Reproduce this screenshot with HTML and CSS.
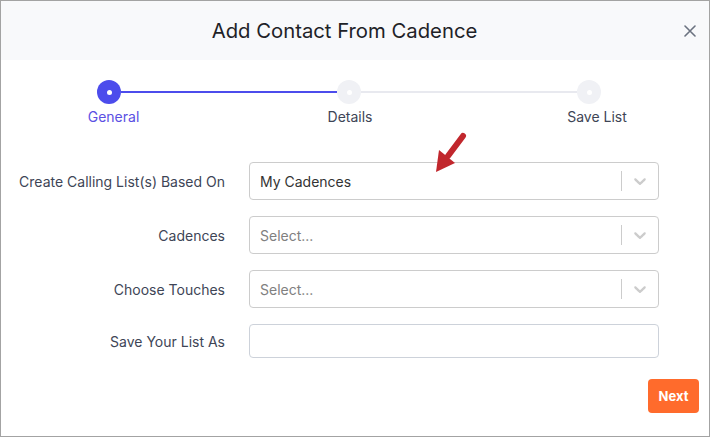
FILE: index.html
```html
<!DOCTYPE html>
<html>
<head>
<meta charset="utf-8">
<link rel="stylesheet" href="styles.css">
</head>
<body>
<div class="modal">
  <div class="modal-header">
    <div class="modal-title">Add Contact From Cadence</div>
    <button class="close" aria-label="Close">
      <svg width="12" height="12" viewBox="0 0 12 12"><path d="M1 1L11 11M11 1L1 11" stroke="#6b7280" stroke-width="1.6" stroke-linecap="round"/></svg>
    </button>
  </div>
  <div class="stepper">
    <div class="step active"><span class="dot"></span><span class="step-label first">General</span></div>
    <div class="line done"></div>
    <div class="step"><span class="dot"></span><span class="step-label second">Details</span></div>
    <div class="line"></div>
    <div class="step"><span class="dot"></span><span class="step-label third">Save List</span></div>
  </div>
  <div class="form">
    <label class="label">Create Calling List(s) Based On</label>
    <div class="select">
      <span class="value">My Cadences</span>
      <span class="sep"></span>
      <svg class="chev" width="20" height="20" viewBox="0 0 20 20"><path fill="#cccccc" d="M4.516 7.548c0.436-0.446 1.043-0.481 1.576 0l3.908 3.747 3.908-3.747c0.533-0.481 1.141-0.446 1.574 0 0.436 0.445 0.408 1.197 0 1.615-0.406 0.418-4.695 4.502-4.695 4.502-0.217 0.223-0.502 0.335-0.787 0.335s-0.57-0.112-0.789-0.335c0 0-4.287-4.084-4.695-4.502s-0.436-1.17 0-1.615z"/></svg>
    </div>
    <label class="label">Cadences</label>
    <div class="select">
      <span class="value placeholder">Select...</span>
      <span class="sep"></span>
      <svg class="chev" width="20" height="20" viewBox="0 0 20 20"><path fill="#cccccc" d="M4.516 7.548c0.436-0.446 1.043-0.481 1.576 0l3.908 3.747 3.908-3.747c0.533-0.481 1.141-0.446 1.574 0 0.436 0.445 0.408 1.197 0 1.615-0.406 0.418-4.695 4.502-4.695 4.502-0.217 0.223-0.502 0.335-0.787 0.335s-0.57-0.112-0.789-0.335c0 0-4.287-4.084-4.695-4.502s-0.436-1.17 0-1.615z"/></svg>
    </div>
    <label class="label">Choose Touches</label>
    <div class="select">
      <span class="value placeholder">Select...</span>
      <span class="sep"></span>
      <svg class="chev" width="20" height="20" viewBox="0 0 20 20"><path fill="#cccccc" d="M4.516 7.548c0.436-0.446 1.043-0.481 1.576 0l3.908 3.747 3.908-3.747c0.533-0.481 1.141-0.446 1.574 0 0.436 0.445 0.408 1.197 0 1.615-0.406 0.418-4.695 4.502-4.695 4.502-0.217 0.223-0.502 0.335-0.787 0.335s-0.57-0.112-0.789-0.335c0 0-4.287-4.084-4.695-4.502s-0.436-1.17 0-1.615z"/></svg>
    </div>
    <label class="label">Save Your List As</label>
    <div class="input"></div>
  </div>
  <div class="footer">
    <button class="next">Next</button>
  </div>
  <svg class="arrow" width="40" height="50" viewBox="0 0 40 50">
    <line x1="33" y1="8" x2="18" y2="28" stroke="#c1272d" stroke-width="6" stroke-linecap="round"/>
    <polygon points="6,44 9,22 25,35" fill="#c1272d"/>
  </svg>
</div>
</body>
</html>
```

FILE: styles.css
```css
* { box-sizing: border-box; }
html, body { margin: 0; padding: 0; background: #fff; }
body { font-family: Inter, "Noto Sans", "Liberation Sans", sans-serif; }

.modal {
  position: relative;
  width: 710px;
  height: 437px;
  border: 1px solid #a3a3a3;
  background: #fff;
  display: flex;
  flex-direction: column;
}

.modal-header {
  height: 59px;
  background: #f8f9fb;
  display: flex;
  align-items: center;
  padding: 0 9px;
}
.modal-title {
  flex: 1;
  text-align: center;
  font-size: 20.3px;
  color: #1e2227;
  font-weight: 400;
}
.close {
  width: 21px;
  height: 21px;
  padding: 0;
  border: 0;
  background: transparent;
  display: flex;
  align-items: center;
  justify-content: center;
}

.stepper {
  display: flex;
  align-items: flex-start;
  padding-left: 96px;
  margin-top: 20px;
  height: 46px;
}
.step {
  width: 24px;
  display: flex;
  flex-direction: column;
  align-items: center;
}
.dot {
  width: 24px;
  height: 24px;
  border-radius: 50%;
  background: #f0f1f5;
  display: flex;
  align-items: center;
  justify-content: center;
}
.dot::after {
  content: "";
  width: 5px;
  height: 5px;
  border-radius: 50%;
  background: #fff;
}
.step.active .dot { background: #4c4cec; }
.step-label {
  white-space: nowrap;
  font-size: 14px;
  line-height: 17px;
  margin-top: 4px;
  color: #3e4556;
}
.step-label.first { margin-left: 9px; }
.step-label.second { margin-left: 2px; }
.step-label.third { margin-left: 16px; }
.step.active .step-label { color: #5b50e3; }
.line {
  width: 216px;
  height: 2px;
  margin-top: 11px;
  background: #e8e9ef;
}
.line.done { background: #4c4cec; }

.form {
  margin-top: 36px;
  display: grid;
  grid-template-columns: 224px 410px;
  column-gap: 24px;
  row-gap: 16px;
  align-items: center;
}
.label {
  text-align: right;
  font-size: 14px;
  color: #3e4556;
}
.select {
  height: 38px;
  border: 1px solid #cccccc;
  border-radius: 4px;
  display: flex;
  align-items: center;
  padding-left: 10px;
  padding-right: 8px;
}
.value {
  flex: 1;
  font-size: 14px;
  color: #333333;
}
.value.placeholder { color: #808080; }
.sep {
  width: 1px;
  height: 20px;
  background: #cccccc;
}
.chev { margin-left: 8px; }
.input {
  height: 34px;
  border: 1px solid #cdd2da;
  border-radius: 4px;
}

.footer {
  display: flex;
  justify-content: flex-end;
  padding-right: 10px;
  margin-top: 21px;
}
.next {
  width: 51px;
  height: 34px;
  border: 0;
  border-radius: 4px;
  background: #ff6b2c;
  color: #fff;
  font-family: Inter, "Liberation Sans", sans-serif;
  font-weight: 700;
  font-size: 13px;
  padding: 0;
}

.arrow {
  position: absolute;
  left: 429px;
  top: 127px;
}
```
